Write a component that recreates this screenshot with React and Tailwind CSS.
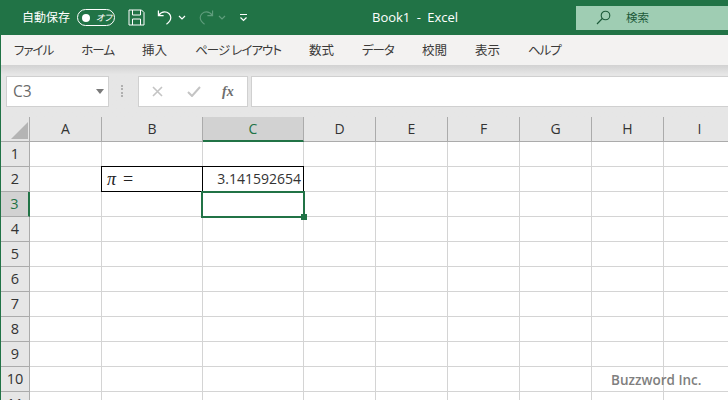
const JP = "font-['Noto_Sans','Noto_Sans_CJK_JP',sans-serif] [font-feature-settings:'palt']"

const TABS = [
  { label: 'ファイル', kana: true },
  { label: 'ホーム', kana: true },
  { label: '挿入' },
  { label: 'ページ レイアウト', kana: true },
  { label: '数式' },
  { label: 'データ', kana: true },
  { label: '校閲' },
  { label: '表示' },
  { label: 'ヘルプ', kana: true },
]
const COLS = [
  { name: 'A', w: 'w-[72px]' },
  { name: 'B', w: 'w-[101px]' },
  { name: 'C', w: 'w-[101px]' },
  { name: 'D', w: 'w-[72px]' },
  { name: 'E', w: 'w-[72px]' },
  { name: 'F', w: 'w-[72px]' },
  { name: 'G', w: 'w-[72px]' },
  { name: 'H', w: 'w-[72px]' },
  { name: 'I', w: 'w-[72px]' },
]
const ROWS = [1, 2, 3, 4, 5, 6, 7, 8, 9, 10, 11]

function TitleBar() {
  return (
    <div className={`h-[35px] shrink-0 bg-[#217346] flex items-center text-white ${JP}`}>
      <span className="ml-[22px] w-[55px] text-[12px] leading-none whitespace-nowrap">自動保存</span>
      <div className="w-[38px] h-[17px] rounded-full border border-white flex items-center pl-[4px]">
        <div className="w-[8px] h-[8px] rounded-full bg-white" />
        <span className="ml-[6px] text-[9px] italic leading-none">オフ</span>
      </div>
      <svg className="ml-[13px]" width="17" height="17" viewBox="0 0 17 17" fill="none" stroke="#fff" strokeWidth="1">
        <path d="M1 1h12.5L16 3.5V16H1z" />
        <path d="M4.5 1v5h8V1M4.5 16v-6h8v6" />
      </svg>
      <svg className="ml-[12px]" width="17" height="17" viewBox="0 0 18 17" fill="none" stroke="#fff" strokeWidth="1.3">
        <path d="M1.5 1v5.5H7" />
        <path d="M1.8 6.2C3.5 3.8 5.6 2.6 8 2.6c3.6 0 6.6 2.6 6.6 6 0 2.6-1.6 5-4.6 7" />
      </svg>
      <svg className="ml-[4px]" width="8" height="5" viewBox="0 0 8 5" fill="none" stroke="#fff" strokeWidth="1.2">
        <path d="M1 1l3 3 3-3" />
      </svg>
      <svg className="ml-[11px]" width="17" height="17" viewBox="0 0 18 17" fill="none" stroke="#5f9d7c" strokeWidth="1.2">
        <path d="M16.5 1v5.5H11" />
        <path d="M16.2 6.2C14.5 3.8 12.4 2.6 10 2.6c-3.6 0-6.6 2.6-6.6 6 0 2.6 1.6 5 4.6 7" />
      </svg>
      <svg className="ml-[4px]" width="8" height="5" viewBox="0 0 8 5" fill="none" stroke="#5f9d7c" strokeWidth="1.2">
        <path d="M1 1l3 3 3-3" />
      </svg>
      <svg className="ml-[13px]" width="9" height="9" viewBox="0 0 9 9" fill="none" stroke="#fff" strokeWidth="1.2">
        <path d="M1 1.5h7M1.5 4.5L4.5 7.5l3-3" />
      </svg>
      <div className="ml-[124px] w-[100px] text-[13px] leading-none whitespace-nowrap font-['Open_Sans',sans-serif] [word-spacing:3px]">Book1 - Excel</div>
      <div className="ml-[104px] flex-1 h-[24px] bg-[#9fcdb3] flex items-center text-[#1d5a3a]">
        <svg className="ml-[20px]" width="15" height="15" viewBox="0 0 15 15" fill="none" stroke="#1d5a3a" strokeWidth="1.1">
          <circle cx="9.5" cy="5.5" r="4.3" />
          <path d="M6.3 8.5L1 14" />
        </svg>
        <span className="ml-[15px] text-[11.5px] leading-none">検索</span>
      </div>
    </div>
  )
}

function RibbonTabs() {
  return (
    <div className={`h-[30px] shrink-0 bg-[#f3f2f1] flex items-center pl-[13px] pt-[2px] gap-[28px] text-[12.5px] text-[#3b3a39] leading-none whitespace-nowrap ${JP}`}>
      {TABS.map((t) => (
        <span key={t.label} className={t.kana ? 'tracking-[-1px]' : ''}>{t.label}</span>
      ))}
    </div>
  )
}

function FormulaBar() {
  return (
    <div className="h-[52px] shrink-0 flex items-start bg-gradient-to-b from-[#d2d2d2] via-[#e6e6e6] via-[18%] to-[#e6e6e6] pt-[11px] pl-[5px]">
      <div className="w-[103px] h-[31px] bg-white border border-[#d0d0d0] flex items-center justify-between pl-[6px] pr-[4px]">
        <span className="font-['Open_Sans',sans-serif] text-[15.5px] leading-none text-[#6a6a6a]">C3</span>
        <span className="w-0 h-0 border-x-[4px] border-x-transparent border-t-[5px] border-t-[#7a7a7a]" />
      </div>
      <div className="w-[3px] h-[12px] ml-[12px] mt-[9px] border-l-2 border-dotted border-[#b0b0b0]" />
      <div className="ml-[14px] w-[110px] h-[31px] bg-white border border-[#d0d0d0] flex items-center">
        <svg className="ml-[13px]" width="11" height="11" viewBox="0 0 11 11" fill="none" stroke="#c4c4c4" strokeWidth="1.6">
          <path d="M1 1l9 9M10 1l-9 9" />
        </svg>
        <svg className="ml-[24px]" width="14" height="11" viewBox="0 0 14 11" fill="none" stroke="#c4c4c4" strokeWidth="2">
          <path d="M1 6l4 4 8-9" />
        </svg>
        <span className="ml-[21px] font-['Liberation_Serif',serif] italic font-bold text-[14px] leading-none text-[#6e6e6e]">fx</span>
      </div>
      <div className="ml-[3px] flex-1 h-[31px] bg-white border-y border-l border-[#d0d0d0]" />
    </div>
  )
}

function Cell({ col, row }) {
  const piCell = row === 2 && col === 'B'
  const numCell = row === 2 && col === 'C'
  const w = COLS.find((c) => c.name === col).w
  return (
    <div className={`${w} shrink-0 h-[25px] border-r border-b border-[#d4d4d4] flex items-center relative`}>
      {(piCell || numCell) && (
        <div className="absolute left-[-1px] top-[-1px] right-[-1px] bottom-[-1px] border border-black" />
      )}
      {piCell && <span className="pl-[5px] font-['Liberation_Serif',serif] italic text-[18px] leading-none text-[#222]">π<span className="not-italic ml-[7px]">=</span></span>}
      {numCell && <span className="w-full pr-[2px] text-right font-['Open_Sans',sans-serif] text-[14px] leading-none text-[#333]">3.141592654</span>}
      {row === 3 && col === 'C' && (
        <div className="absolute left-[-2px] top-[-1px] right-[-2px] bottom-[-2px] border-2 border-[#217346] z-10">
          <div className="absolute right-[-4px] bottom-[-4px] w-[6px] h-[6px] bg-[#217346]" />
        </div>
      )}
    </div>
  )
}

function Sheet() {
  return (
    <div className="flex-1 overflow-hidden bg-white font-['Open_Sans',sans-serif]">
      <div className="flex h-[25px] bg-[#e6e6e6] border-b border-[#ababab]">
        <div className="w-[29px] shrink-0 border-r border-[#ababab] relative">
          <div className="absolute right-[1px] bottom-[2px] w-0 h-0 border-l-[17px] border-l-transparent border-b-[17px] border-b-[#b4b4b4]" />
        </div>
        {COLS.map((c) => (
          <div
            key={c.name}
            className={`${c.w} shrink-0 flex items-center justify-center text-[14px] leading-none ${
              c.name === 'C'
                ? 'bg-[#d2d2d2] text-[#217346] border-r border-[#ababab] border-b-2 border-b-[#217346] h-[25px]'
                : 'text-[#333] border-r border-[#ababab]'
            }`}
          >
            {c.name}
          </div>
        ))}
      </div>
      {ROWS.map((r) => (
        <div key={r} className="flex">
          <div
            className={`w-[29px] shrink-0 h-[25px] flex items-center justify-center text-[14.5px] leading-none border-b ${
              r === 3
                ? 'bg-[#d2d2d2] text-[#217346] border-[#ababab] border-r-2 border-r-[#217346]'
                : 'bg-[#e6e6e6] text-[#333] border-[#ababab] border-r border-r-[#ababab]'
            }`}
          >
            {r}
          </div>
          {COLS.map((c) => (
            <Cell key={c.name} col={c.name} row={r} />
          ))}
        </div>
      ))}
    </div>
  )
}

export default function App() {
  return (
    <div className="relative w-[728px] h-[400px] overflow-hidden flex flex-col">
      <TitleBar />
      <div className="flex-1 min-h-0 flex flex-col border-l border-[#217346]">
        <RibbonTabs />
        <FormulaBar />
        <Sheet />
      </div>
      <div className="absolute left-[611px] top-[374px] z-20 text-[13.5px] font-semibold leading-none text-[#7f7f7f] whitespace-nowrap font-['Open_Sans',sans-serif]">Buzzword Inc.</div>
    </div>
  )
}
